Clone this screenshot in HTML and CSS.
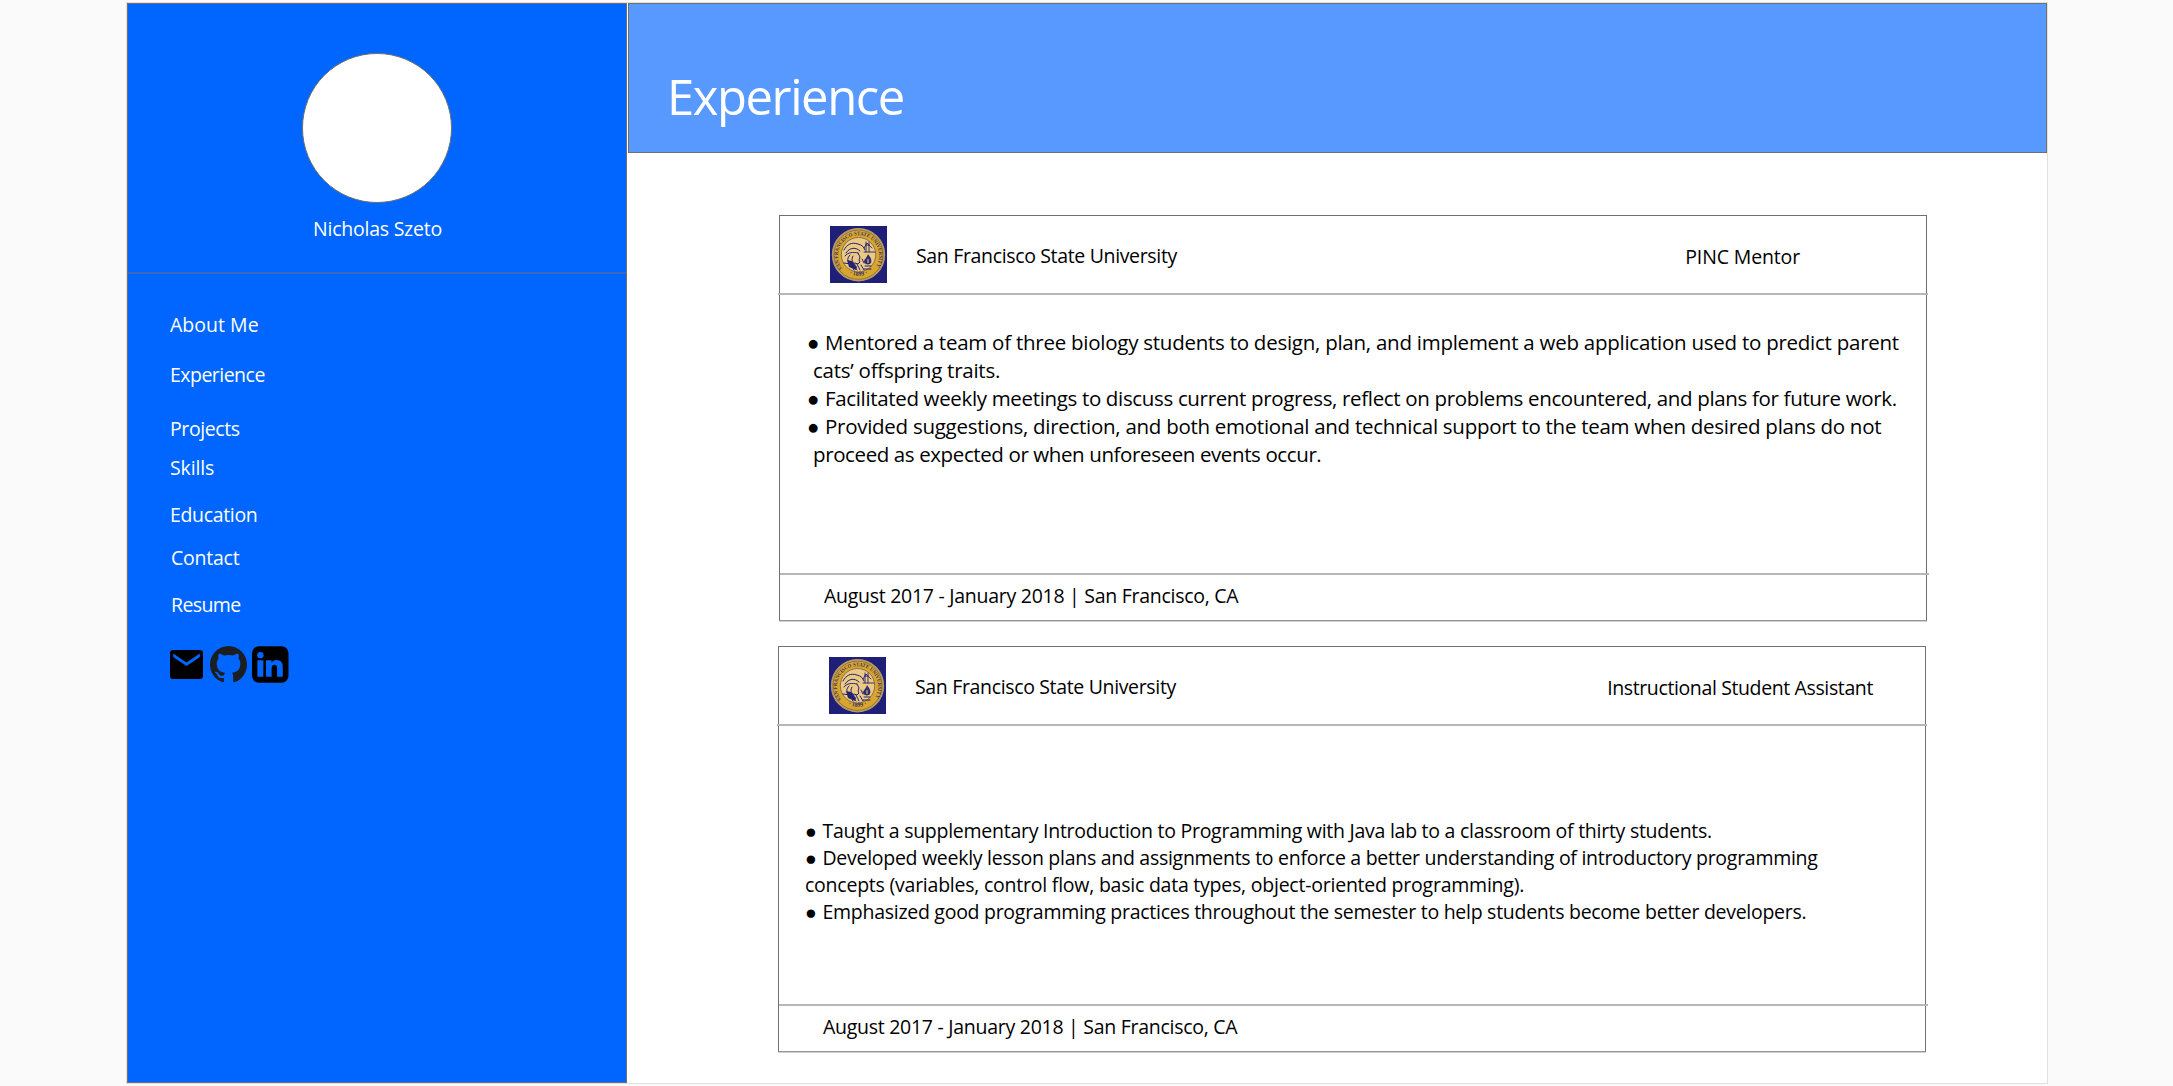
FILE: index.html
```html
<!DOCTYPE html>
<html lang="en">
<head>
<meta charset="utf-8">
<title>Nicholas Szeto - Experience</title>
<link rel="stylesheet" href="styles.css">
</head>
<body>
<svg width="0" height="0" class="defs" aria-hidden="true">
  <defs>
    <path id="arc-top" d="M12.3 42.5A20.6 20.6 0 1 1 44.7 42.5"/>
    <path id="arc-bottom" d="M14 44.5A22.4 22.4 0 0 0 43 44.5"/>
    <symbol id="seal" viewBox="0 0 57 57">
      <rect width="57" height="57" fill="#1f1f78"/>
      <circle cx="28.5" cy="28.7" r="26.1" fill="#d8a62c" stroke="#a99a78" stroke-width="1.2"/>
      <circle cx="28.5" cy="28.7" r="24.6" fill="none" stroke="#4a4168" stroke-width=".5"/>
      <circle cx="28.5" cy="28.7" r="17.2" fill="#ecc984" stroke="#8a7050" stroke-width="1"/>
      <g fill="#3a3464" class="seal-text">
        <text font-size="5.4"><textPath href="#arc-top" textLength="89" lengthAdjust="spacingAndGlyphs">SAN FRANCISCO STATE UNIVERSITY</textPath></text>
        <text font-size="6"><textPath href="#arc-bottom" startOffset="50%" text-anchor="middle">· 1899 ·</textPath></text>
      </g>
      <g fill="none" stroke="#24236f" stroke-width="1" stroke-linecap="round">
        <path d="M14 24c3-6 8-8 14-6 4 1 6 3 7 6M16 27c4-6 10-6 14-2M15 30c3-4 8-4 13-3M20 29c-3 3-3 6 0 8M23 30c-2 3-1 6 2 8M28 27l2 4-1 3 1 2-2 2-3-1"/>
        <path d="M34 26h11M36 26V16M39 26V16M34 22l3-5 5 5M36 19h3" stroke-width=".9"/>
        <path d="M14 37l7 1 3 6M18 35l6 5 3 4M27 38l3 6M31 39l3 5M35 40h6M34 43h7M32 33l2 4"/>
      </g>
      <path d="M38 28c3 4 4 6 3 9-1 2-6 2-7-1 0-3 3-4 4-8z" fill="#2f2c70"/>
      <path d="M17 34l5 1 5 6-1 3-7-3z" fill="#24236f"/>
      <path d="M38 33v4" stroke="#ecc984" stroke-width="1"/>
    </symbol>
  </defs>
</svg>

<div class="page">
  <aside class="sidebar">
    <div class="profile">
      <div class="avatar"></div>
      <div class="name">Nicholas Szeto</div>
    </div>
    <nav class="nav">
      <a class="about">About Me</a>
      <a class="experience">Experience</a>
      <a class="projects">Projects</a>
      <a class="skills">Skills</a>
      <a class="education">Education</a>
      <a class="contact">Contact</a>
      <a class="resume">Resume</a>
    </nav>
    <div class="social">
      <svg class="mail" width="33" height="29" viewBox="0 0 33 29"><path fill-rule="evenodd" d="M3 0h27a3 3 0 0 1 3 3v23a3 3 0 0 1-3 3H3a3 3 0 0 1-3-3V3a3 3 0 0 1 3-3zM3.2 3.6v3.5L16.5 16.100l13.300-9V3.600l-13.300 9z"/></svg>
      <svg class="github" width="37" height="36.500" viewBox="0 0 16 15.700" preserveAspectRatio="none"><path fill="#1b1f23" d="M8 0C3.580 0 0 3.580 0 8c0 3.540 2.290 6.530 5.470 7.590.4.070.550-.170.550-.380 0-.190-.010-.820-.010-1.490-2.010.370-2.530-.490-2.690-.940-.090-.230-.480-.940-.820-1.130-.280-.150-.680-.520-.010-.530.630-.010 1.080.580 1.230.820.720 1.210 1.870.870 2.330.660.070-.520.280-.870.510-1.070-1.780-.200-3.640-.890-3.640-3.950 0-.870.310-1.590.820-2.150-.080-.200-.360-1.020.080-2.120 0 0 .670-.210 2.200.820.640-.180 1.320-.270 2-.270s1.360.090 2 .270c1.530-1.040 2.200-.820 2.200-.820.440 1.100.160 1.920.080 2.120.510.560.820 1.270.820 2.150 0 3.070-1.870 3.750-3.650 3.950.290.250.540.730.540 1.480 0 1.070-.010 1.930-.010 2.200 0 .210.150.460.550.380A8.010 8.010 0 0 0 16 8c0-4.420-3.580-8-8-8z"/></svg>
      <svg class="linkedin" width="36.500" height="37" viewBox="0 0 37 37"><rect width="37" height="37" rx="7"/><g fill="#06f"><circle cx="8.500" cy="9" r="3.200"/><path d="M5.500 14.300h6V31h-6zM14.200 14.300h5.600v2.300c1-1.700 2.800-2.700 5.100-2.700 4.600 0 6.300 2.900 6.300 7.600V31h-5.800v-8.400c0-2.300-.6-3.800-2.600-3.800-2.100 0-2.900 1.600-2.900 3.800V31h-5.700z"/></g></svg>
    </div>
  </aside>

  <main class="main">
    <header class="banner"><h1>Experience</h1></header>
    <section class="cards">
      <article class="card">
        <div class="card-head">
          <svg class="logo" width="57" height="57"><use href="#seal"/></svg>
          <div class="org">San Francisco State University</div>
          <div class="role mentor">PINC Mentor</div>
        </div>
        <div class="card-body mentor-body">
          <p class="m1"><span class="dot">●</span>Mentored a team of three biology students to design, plan, and implement a web application used to predict parent</p>
          <p class="m2 cont">cats’ offspring traits.</p>
          <p class="m3"><span class="dot">●</span>Facilitated weekly meetings to discuss current progress, reflect on problems encountered, and plans for future work.</p>
          <p class="m4"><span class="dot">●</span>Provided suggestions, direction, and both emotional and technical support to the team when desired plans do not</p>
          <p class="m5 cont">proceed as expected or when unforeseen events occur.</p>
        </div>
        <div class="card-foot">August 2017 - January 2018 | San Francisco, CA</div>
      </article>

      <article class="card second">
        <div class="card-head">
          <svg class="logo" width="57" height="57"><use href="#seal"/></svg>
          <div class="org">San Francisco State University</div>
          <div class="role assistant">Instructional Student Assistant</div>
        </div>
        <div class="card-body assistant-body">
          <p class="a1"><span class="dot">●</span>Taught a supplementary Introduction to Programming with Java lab to a classroom of thirty students.</p>
          <p class="a2"><span class="dot">●</span>Developed weekly lesson plans and assignments to enforce a better understanding of introductory programming</p>
          <p class="a3">concepts (variables, control flow, basic data types, object-oriented programming).</p>
          <p class="a4"><span class="dot">●</span>Emphasized good programming practices throughout the semester to help students become better developers.</p>
        </div>
        <div class="card-foot">August 2017 - January 2018 | San Francisco, CA</div>
      </article>
    </section>
  </main>
</div>
</body>
</html>
```
FILE: styles.css
```css
* { box-sizing: border-box; }

body {
  margin: 0;
  padding: 2px 0 0 126px;
  height: 1086px;
  overflow: hidden;
  background: #fafafa;
  color: #000;
  font: 19.5px/27px "Open Sans", "Noto Sans", sans-serif;
}

h1, p { margin: 0; font-weight: 400; }
p { white-space: nowrap; }

.defs { display: block; height: 0; }

.page {
  display: flex;
  gap: 1px;
  width: 1922px;
  height: 1082px;
  border: 1px solid #e0e0e0;
  background: #fff;
}

/* Sidebar */
.sidebar {
  width: 500px;
  flex: none;
  border: 1px solid #707070;
  background: #06f;
  color: #fff;
}
.profile {
  display: flex;
  flex-direction: column;
  align-items: center;
  gap: 12px;
  padding: 49px 0 30px;
  border-bottom: 2px solid #386bb8;
}
.avatar {
  width: 150px;
  height: 150px;
  border: 1px solid #707070;
  border-radius: 50%;
  background: #fff;
}
.name { letter-spacing: -.237px; padding-left: 1px; }

.nav {
  display: flex;
  flex-direction: column;
  padding: 37px 0 0 42px;
}
.about { letter-spacing: .02px; }
.experience { margin-top: 23px; letter-spacing: -.52px; }
.projects { margin-top: 27px; letter-spacing: -.399px; }
.skills { margin-top: 12px; letter-spacing: -.141px; }
.education { margin-top: 20px; letter-spacing: -.34px; }
.contact { margin-top: 16px; padding-left: 1px; letter-spacing: -.233px; }
.resume { margin-top: 20px; padding-left: 1px; letter-spacing: -.62px; }

.social {
  display: flex;
  align-items: flex-start;
  padding: 28px 0 0 42px;
}
.mail { margin-top: 4px; }
.github { margin-left: 7px; }
.linkedin { margin-left: 5px; }

/* Main column */
.main { flex: 1; }
.banner {
  height: 150px;
  padding: 59px 0 0 38px;
  border: 1px solid #707070;
  background: #5799ff;
  color: #fff;
}
.banner h1 {
  font-size: 49px;
  line-height: 66px;
  letter-spacing: -1.45px;
}

.cards {
  display: flex;
  flex-direction: column;
  gap: 25px;
  padding: 62px 0 0 151px;
}
.card {
  width: 1148px;
  height: 406px;
  border: 1px solid #707070;
  border-bottom-color: #969696;
  box-shadow: 0 1px #d0d0d0;
}
.second { margin-left: -1px; }

.card-head {
  display: flex;
  height: 79px;
  margin: 0 -2px;
  padding: 10px 0 0 52px;
  border-bottom: 2px solid #b7b7b7;
}
.logo { flex: none; }
.org { margin: 16px 0 0 29px; letter-spacing: -.343px; }
.role { margin: 17px 0 0 auto; }
.mentor { padding-right: 128px; letter-spacing: -.144px; }
.assistant { padding-right: 54px; letter-spacing: -.378px; }

.card-body { height: 278px; }
.mentor-body {
  padding: 33px 0 0 27px;
  font-size: 20.5px;
  line-height: 28px;
}
.assistant-body { padding: 91px 0 0 26px; }
.dot { display: inline-block; width: 18px; letter-spacing: 0; }
.assistant-body .dot { width: 17.5px; }
.cont { padding-left: 6px; }
.m1 { letter-spacing: -.253px; }
.m2 { letter-spacing: -.25px; }
.m3 { letter-spacing: -.34px; }
.m4 { letter-spacing: -.275px; }
.m5 { letter-spacing: -.39px; }
.a1 { letter-spacing: -.262px; }
.a2 { letter-spacing: -.279px; }
.a3 { letter-spacing: -.23px; }
.a4 { letter-spacing: -.277px; }

.card-foot {
  height: 47px;
  margin-right: -3px;
  padding: 7px 0 0 44px;
  border-top: 2px solid #b7b7b7;
  letter-spacing: -.274px;
}

.seal-text { font-family: "Liberation Serif", serif; font-weight: 700; letter-spacing: 0; }
```
